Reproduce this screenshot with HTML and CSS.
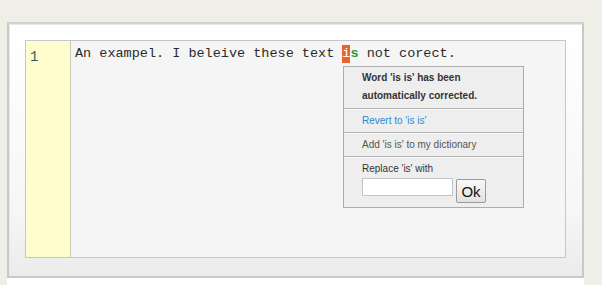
FILE: index.html
```html
<!DOCTYPE html>
<html>
<head>
<meta charset="utf-8">
<link rel="stylesheet" href="styles.css">
</head>
<body>
<div class="panel">
  <div class="editor">
    <div class="gutter">1</div>
    <div class="code">An exampel. I beleive these text <span class="hl">i</span><span class="ok">s</span> not corect.</div>
  </div>
</div>
<div class="panel-next"></div>
<div class="popup">
  <div class="sec msg">Word 'is is' has been<br>automatically corrected.</div>
  <div class="sec link">Revert to 'is is'</div>
  <div class="sec add">Add 'is is' to my dictionary</div>
  <div class="sec repl">
    <div class="repl-label">Replace 'is' with</div>
    <div class="repl-row">
      <input class="repl-input" type="text">
      <button class="repl-btn">Ok</button>
    </div>
  </div>
</div>
</body>
</html>
```
FILE: styles.css
```css
html, body {
  margin: 0;
  padding: 0;
}
body {
  background: #efeee7;
  padding: 22px 0 0 7px;
  font-family: "Liberation Sans", Arial, sans-serif;
  position: relative;
  height: 285px;
  box-sizing: border-box;
  overflow: hidden;
}
.panel {
  width: 577px;
  height: 256px;
  box-sizing: border-box;
  border: 2px solid #c9c9c9;
  border-top-color: #d2d2d2;
  background: linear-gradient(#ffffff, #f6f6f6 75%, #ebebeb);
  box-shadow: inset 1px 1px 0 #e8e8e8;
  padding: 16px 0 0 16px;
}
.panel-next {
  width: 577px;
  height: 10px;
  background: #fff;
}
.editor {
  display: flex;
  width: 541px;
  height: 218px;
  box-sizing: border-box;
  border: 1px solid #c6c6c6;
  background: #f5f5f5;
}
.gutter {
  width: 45px;
  box-sizing: border-box;
  background: #fffdcd;
  border-right: 1px solid #cbc8b4;
  padding: 7px 0 0 4px;
  font-family: "Liberation Mono", monospace;
  font-size: 14px;
  line-height: 18px;
  color: #2d5e5e;
}
.code {
  flex: 1;
  padding: 4px 0 0 4px;
  font-family: "Liberation Mono", monospace;
  font-size: 13.5px;
  line-height: 18px;
  color: #2a2a2a;
  white-space: pre;
}
.hl {
  background: #e9632b;
  color: #fff;
  padding: 1px 0 2px;
}
.ok {
  color: #2a9a3c;
  font-weight: bold;
}
.popup {
  position: absolute;
  left: 343px;
  top: 66px;
  width: 181px;
  height: 142px;
  box-sizing: border-box;
  border: 1px solid #acacac;
  background: #eeeeee;
  font-size: 10px;
}
.sec {
  padding: 0 0 0 18px;
  border-top: 1px solid #b4b4b4;
  box-shadow: inset 0 1px 0 #f8f8f8;
}
.sec:first-child {
  border-top: none;
  box-shadow: none;
}
.msg {
  font-weight: bold;
  color: #333;
  line-height: 18px;
  padding-top: 2px;
  padding-bottom: 3px;
}
.link {
  color: #2b8ad0;
  line-height: 18px;
  padding-top: 3px;
  padding-bottom: 2px;
}
.add {
  color: #555;
  line-height: 18px;
  padding-top: 3px;
  padding-bottom: 2px;
}
.repl {
  color: #333;
  padding-top: 5px;
}
.repl-label {
  line-height: 14px;
}
.repl-row {
  display: flex;
  align-items: flex-start;
  gap: 3px;
  margin-top: 2px;
}
.repl-input {
  width: 91px;
  height: 18px;
  box-sizing: border-box;
  margin: 0;
  padding: 0 2px;
  border: 1px solid #c4c4c4;
  background: #fff;
}
.repl-btn {
  margin: 1px 0 0 0;
  width: 30px;
  height: 24px;
  padding: 0;
  border: 1px solid #9a9a9a;
  border-radius: 2px;
  background: linear-gradient(#f8f8f8, #e2e2e2);
  font-family: "Liberation Sans", Arial, sans-serif;
  font-size: 15px;
  color: #111;
}
```
